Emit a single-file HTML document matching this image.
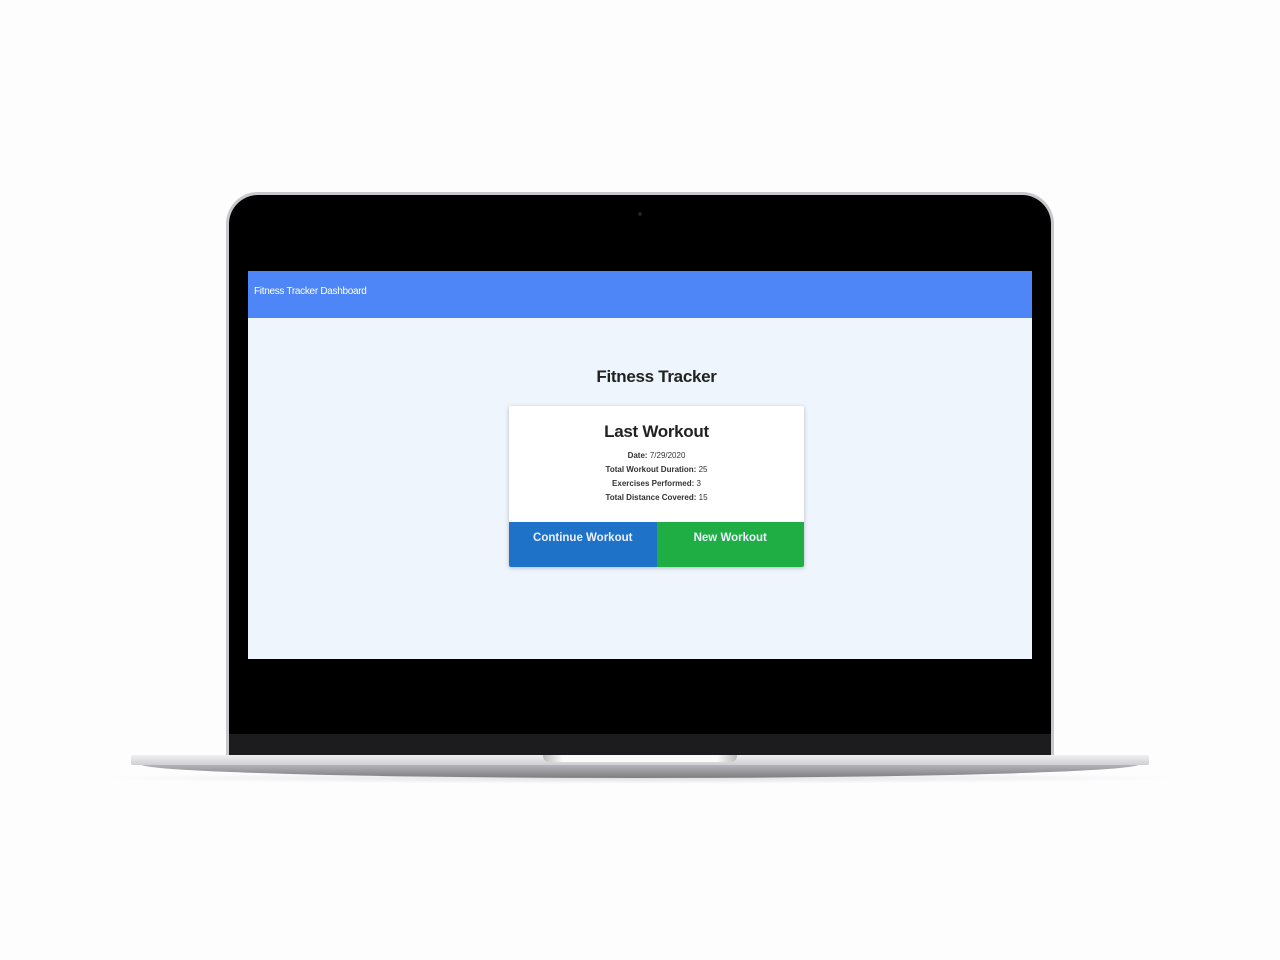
<!DOCTYPE html>
<html><head><style>
body{margin:0;width:1280px;height:960px;background:#fdfdfe;position:relative;overflow:hidden;font-family:"Liberation Sans",sans-serif}
.lid{position:absolute;left:226px;top:192px;width:828px;height:570px;background:#c8c8cc;border-radius:32px 32px 0 0}
.bez{position:absolute;left:229px;top:195px;width:822px;height:567px;background:#000;border-radius:29px 29px 0 0}
.chin{position:absolute;left:229px;top:734px;width:822px;height:22px;background:#1c1c1e}
.cam{position:absolute;left:638px;top:212px;width:4px;height:4px;border-radius:50%;background:#222}
.scr{position:absolute;left:248px;top:271px;width:784px;height:388px;background:#eff5fd}
.nav{height:47px;background:#4f86f7;color:#fff;font-size:10px;line-height:42px;padding-left:6px;letter-spacing:-0.3px}
.base{position:absolute;left:131px;top:755px;width:1018px;height:10px;background:linear-gradient(#f0f0f2,#cfcfd3);border-radius:2px}
.base2{position:absolute;left:140px;top:764px;width:1000px;height:14px;background:linear-gradient(#b8b8bc,#7d7d82);border-radius:0 0 50% 50%/0 0 100% 100%}
.notch{position:absolute;left:543px;top:755px;width:194px;height:7px;background:linear-gradient(90deg,#bbb,#fafafa 10%,#fafafa 90%,#bbb);border-radius:0 0 6px 6px}
.shadow{position:absolute;left:90px;top:772px;width:1100px;height:12px;background:radial-gradient(ellipse at center,rgba(0,0,0,.12),rgba(0,0,0,0) 70%)}
h1{position:absolute;left:261px;width:295px;top:96px;margin:0;text-align:center;font-size:17px;color:#222;font-weight:bold;letter-spacing:-0.3px}
.card{position:absolute;left:261px;top:135px;width:295px;height:161px;background:#fff;box-shadow:0 1px 4px rgba(0,0,0,.25);border-radius:2px;overflow:hidden;text-align:center}
.card h2{margin:16px 0 7px;font-size:17px;color:#222;letter-spacing:-0.3px}
.card p{margin:0;font-size:8px;line-height:14px;color:#333}
.btns{position:absolute;left:0;top:116px;width:295px;height:45px;display:flex}
.btns div{flex:1;color:#eef;font-size:11.5px;font-weight:bold;padding-top:10px;box-sizing:border-box}
</style></head><body>
<div class="shadow"></div>
<div class="lid"></div><div class="bez"></div><div class="chin"></div><div class="cam"></div>
<div class="scr"><div class="nav">Fitness Tracker Dashboard</div>
<h1>Fitness Tracker</h1>
<div class="card"><h2>Last Workout</h2>
<p><b>Date:</b> 7/29/2020</p><p><b>Total Workout Duration:</b> 25</p><p><b>Exercises Performed:</b> 3</p><p><b>Total Distance Covered:</b> 15</p>
<div class="btns"><div style="background:#1e73c8">Continue Workout</div><div style="background:#1fae44">New Workout</div></div></div>
</div>
<div class="base2"></div><div class="base"></div><div class="notch"></div>
</body></html>
